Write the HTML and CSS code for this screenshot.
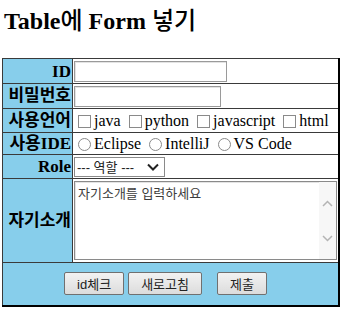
FILE: index.html
```html
<!DOCTYPE html>
<html lang="ko">
<head>
  <meta charset="UTF-8">
  <title>Table에 Form 넣기</title>
  <link rel="stylesheet" href="styles.css">
</head>
<body>
  <h2 class="title">Table<span class="ko">에</span> Form <span class="ko">넣기</span></h2>
  <form>
    <table class="form-table">
      <colgroup><col class="label-col"><col></colgroup>
      <tr class="r-id">
        <th>ID</th>
        <td><input type="text" class="txt id-input"></td>
      </tr>
      <tr class="r-pw">
        <th>비밀번호</th>
        <td><input type="password" class="txt pw-input"></td>
      </tr>
      <tr class="r-lang">
        <th>사용언어</th>
        <td>
          <label><input type="checkbox" class="chk">java</label>
          <label><input type="checkbox" class="chk">python</label>
          <label><input type="checkbox" class="chk">javascript</label>
          <label><input type="checkbox" class="chk">html</label>
        </td>
      </tr>
      <tr class="r-ide">
        <th>사용IDE</th>
        <td>
          <label><input type="radio" name="ide" class="rad">Eclipse</label>
          <label><input type="radio" name="ide" class="rad">IntelliJ</label>
          <label><input type="radio" name="ide" class="rad">VS Code</label>
        </td>
      </tr>
      <tr class="r-role">
        <th>Role</th>
        <td>
          <span class="sel-wrap">
            <select class="sel">
              <option>--- 역할 ---</option>
              <option>개발자</option>
              <option>디자이너</option>
              <option>기획자</option>
            </select>
            <svg class="sel-arrow" width="12" height="8" viewBox="0 0 12 8"><polyline points="1,1.5 6,6.5 11,1.5" fill="none" stroke="#222" stroke-width="2"/></svg>
          </span>
        </td>
      </tr>
      <tr class="r-intro">
        <th>자기소개</th>
        <td>
          <div class="memo">
            <textarea class="memo-text" placeholder="자기소개를 입력하세요"></textarea>
            <div class="memo-scroll">
              <svg width="11" height="7" viewBox="0 0 11 7"><polyline points="1,6 5.5,1.5 10,6" fill="none" stroke="#b4b4b4" stroke-width="1.5"/></svg>
              <svg width="11" height="7" viewBox="0 0 11 7"><polyline points="1,1 5.5,5.5 10,1" fill="none" stroke="#b4b4b4" stroke-width="1.5"/></svg>
            </div>
          </div>
        </td>
      </tr>
      <tr class="r-btn">
        <td colspan="2" class="btn-cell">
          <div class="btns">
            <input type="button" class="btn" value="id체크">
            <input type="button" class="btn" value="새로고침">
            <input type="submit" class="btn btn-submit" value="제출">
          </div>
        </td>
      </tr>
    </table>
  </form>
</body>
</html>
```

FILE: styles.css
```css
body { margin: 0; padding: 0 2px; font-family: "Liberation Serif", "Noto Sans CJK KR", serif; color: #000; background: #fff; }
.title { font-size: 24px; line-height: 28px; margin: 7px 0 23px 2px; }
.title .ko { font-weight: 500; }

.form-table { border-collapse: collapse; table-layout: fixed; width: 338px; border: 1px solid #000; border-right-width: 2px; border-bottom-width: 2px; font-size: 16px; line-height: 19px; }
.label-col { width: 70px; }
.form-table th, .form-table td { border: 1px solid #3a3a3a; padding: 1px; }
.form-table th { background: #87ceeb; text-align: right; font-weight: bold; font-size: 17px; white-space: nowrap; }
.form-table td { white-space: nowrap; }

.r-id { height: 25px; }
.r-pw { height: 24px; }
.r-lang { height: 24px; }
.r-ide { height: 22px; }
.r-role { height: 23px; }
.r-intro { height: 84px; }
.r-btn { height: 43px; }

.txt { box-sizing: border-box; height: 21px; border: 1px solid #9a9a9a; box-shadow: inset 1px 1px 0 #e3e3e3; padding: 1px 2px; font-size: 13px; vertical-align: middle; margin: 0; }
.id-input { width: 153px; }
.pw-input { width: 147px; }

.chk, .rad { appearance: none; -webkit-appearance: none; width: 13px; height: 13px; border: 1px solid #8a8a8a; background: #fff; margin: 0 3px 0 4px; vertical-align: -2px; }
.rad { border-radius: 50%; }

.sel-wrap { position: relative; display: inline-block; vertical-align: middle; }
.sel { appearance: none; -webkit-appearance: none; box-sizing: border-box; width: 91px; height: 20px; border: 1px solid #8a8a8a; background: #fff; padding: 0 18px 0 2px; font-family: "Liberation Sans", "Noto Sans CJK KR", sans-serif; font-size: 13px; color: #222; margin: 0; display: block; }
.sel-arrow { position: absolute; right: 6px; top: 6px; pointer-events: none; }

.memo { display: flex; box-sizing: border-box; width: 263px; height: 79px; border: 1px solid #8a8a8a; box-shadow: inset 1px 1px 0 #e3e3e3; background: #fff; }
.memo-text { flex: 1; border: none; resize: none; outline: none; padding: 1px 3px; font-family: "Liberation Sans", "Noto Sans CJK KR", sans-serif; font-size: 13px; background: transparent; }
.memo-text::placeholder { color: #3c3c3c; }
.memo-scroll { width: 17px; background: #f7f7f7; display: flex; flex-direction: column; align-items: center; justify-content: center; gap: 28px; }

.btn-cell { background: #87ceeb; }
.btns { display: flex; justify-content: center; gap: 4px; padding-right: 10px; }
.btn { height: 23px; padding: 0 12px; border: 1px solid #707070; border-radius: 2px; background: linear-gradient(#f2f2f2, #dcdcdc); font-family: "Liberation Sans", "Noto Sans CJK KR", sans-serif; font-size: 13px; color: #222; margin: 0; }
.btn-submit { margin-left: 11px; }
```
